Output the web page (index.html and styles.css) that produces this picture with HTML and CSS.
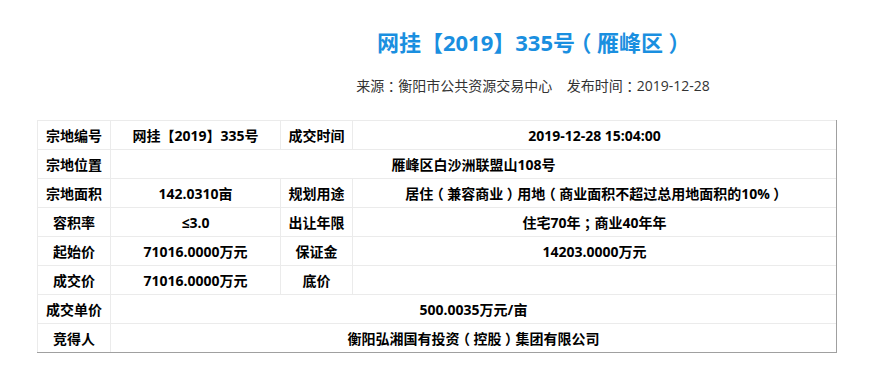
FILE: index.html
```html
<!DOCTYPE html>
<html lang="zh-CN">
<head>
<meta charset="utf-8">
<title>网挂【2019】335号（雁峰区）</title>
<link rel="stylesheet" href="styles.css">
</head>
<body>
<div class="header">
  <h1 class="title">网挂【2019】335号<span class="p">（</span>雁峰区<span class="p">）</span></h1>
  <p class="source">来源<span class="p">：</span>衡阳市公共资源交易中心&nbsp;&nbsp;&nbsp;&nbsp;发布时间<span class="p">：</span>2019-12-28</p>
</div>
<table class="info">
  <colgroup>
    <col class="c1"><col class="c2"><col class="c3"><col class="c4">
  </colgroup>
  <tr><td>宗地编号</td><td>网挂【2019】335号</td><td>成交时间</td><td>2019-12-28 15:04:00</td></tr>
  <tr><td>宗地位置</td><td colspan="3">雁峰区白沙洲联盟山108号</td></tr>
  <tr><td>宗地面积</td><td>142.0310亩</td><td>规划用途</td><td>居住<span class="p">（</span>兼容商业<span class="p">）</span>用地<span class="p">（</span>商业面积不超过总用地面积的10%<span class="p">）</span></td></tr>
  <tr><td>容积率</td><td>≤3.0</td><td>出让年限</td><td>住宅70年<span class="p">；</span>商业40年年</td></tr>
  <tr><td>起始价</td><td>71016.0000万元</td><td>保证金</td><td>14203.0000万元</td></tr>
  <tr><td>成交价</td><td>71016.0000万元</td><td>底价</td><td></td></tr>
  <tr><td>成交单价</td><td colspan="3">500.0035万元/亩</td></tr>
  <tr><td>竞得人</td><td colspan="3">衡阳弘湘国有投资<span class="p">（</span>控股<span class="p">）</span>集团有限公司</td></tr>
</table>
</body>
</html>
```
FILE: styles.css
```css
body {
  margin: 0;
  background: #fff;
  font-family: "Open Sans", "Noto Sans CJK SC", sans-serif;
}
.header {
  padding-top: 27px;
}
.title {
  margin: 0;
  padding-left: 184px;
  font-size: 22px;
  line-height: 30px;
  font-weight: bold;
  color: #1a8fe0;
  text-align: center;
}
.source {
  margin: 19px 0 0;
  padding-left: 188px;
  font-size: 14px;
  line-height: 20px;
  color: #333;
  text-align: center;
}
/* centre full-width punctuation inside a full em */
.p {
  font-feature-settings: "halt";
  padding: 0 0.25em;
}
.info {
  margin: 24px 0 0 37px;
  width: 800px;
  table-layout: fixed;
  border-collapse: separate;
  border-spacing: 0;
  border-right: 1px solid #a0a0a0;
  border-bottom: 1px solid #a0a0a0;
}
.c1 { width: 73px; }
.c2 { width: 170px; }
.c3 { width: 72px; }
.c4 { width: 484px; }
.info tr { height: 29px; }
.info td {
  padding: 0;
  border-top: 1px solid #ebebeb;
  border-left: 1px solid #ebebeb;
  font-size: 14px;
  font-weight: bold;
  color: #000;
  text-align: center;
  vertical-align: middle;
  white-space: nowrap;
}
```
